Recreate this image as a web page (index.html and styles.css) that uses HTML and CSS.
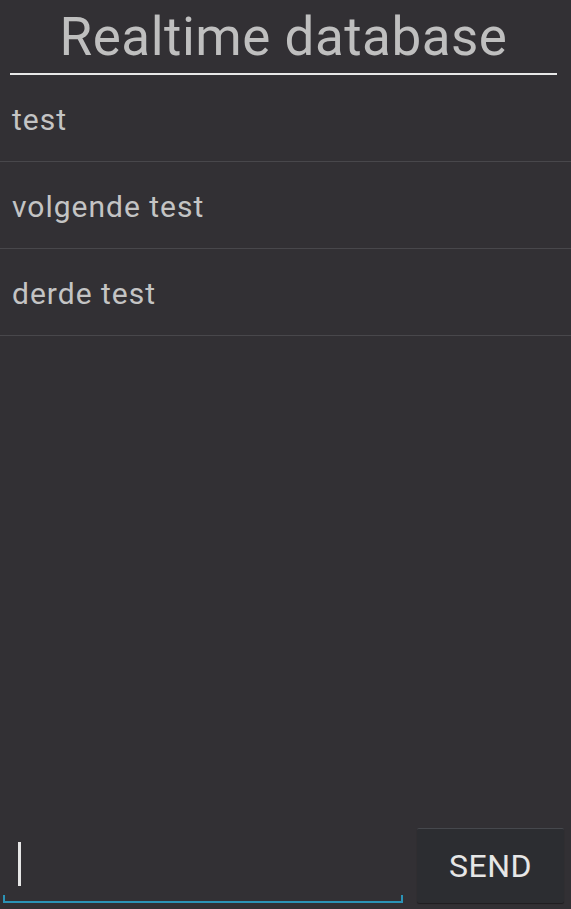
FILE: index.html
```html
<!DOCTYPE html>
<html>
<head>
<meta charset="utf-8">
<link rel="stylesheet" href="styles.css">
</head>
<body>
<div class="app">
  <header class="header">
    <h1 class="title">Realtime database</h1>
  </header>
  <ul class="list">
    <li class="item">test</li>
    <li class="item">volgende test</li>
    <li class="item">derde test</li>
  </ul>
  <div class="composer">
    <div class="input">
      <span class="cursor"></span>
    </div>
    <button class="send">SEND</button>
  </div>
</div>
</body>
</html>
```
FILE: styles.css
```css
html, body {
  margin: 0;
  padding: 0;
  background: #323034;
}
.app {
  width: 571px;
  height: 909px;
  display: flex;
  flex-direction: column;
  font-family: Roboto, "Liberation Sans", sans-serif;
  background: #323034;
}
.header {
  padding: 0 14px 0 10px;
}
.title {
  margin: 0;
  font-weight: 400;
  font-size: 53px;
  letter-spacing: 0.5px;
  line-height: 74px;
  height: 73px;
  text-align: center;
  color: #bfbfbf;
  border-bottom: 2px solid #e8e8e8;
  overflow: hidden;
}
.list {
  list-style: none;
  margin: 0;
  padding: 0;
  flex: 1;
}
.item {
  height: 83px;
  padding-top: 3px;
  border-bottom: 1px solid #48474b;
  padding-left: 12px;
  font-size: 30px;
  letter-spacing: 1px;
  line-height: 83px;
  color: #c4c4c4;
}
.composer {
  display: flex;
  align-items: flex-end;
  padding: 0 7px 6px 3px;
  gap: 14px;
}
.input {
  flex: 1;
  height: 73px;
  position: relative;
  border-bottom: 2px solid #2b93b6;
  display: flex;
  align-items: center;
  padding-left: 15px;
}
.input::before {
  content: "";
  position: absolute;
  left: 0;
  bottom: 0;
  width: 2px;
  height: 6px;
  background: #2b93b6;
}
.input::after {
  content: "";
  position: absolute;
  right: 0;
  bottom: 0;
  width: 2px;
  height: 6px;
  background: #2b93b6;
}
.cursor {
  display: block;
  width: 3px;
  height: 44px;
  margin-top: -2px;
  background: #e6e6e6;
}
.send {
  width: 147px;
  height: 75px;
  border: none;
  border-top: 1px solid #46484d;
  background: #2c2d31;
  color: #e6e6e6;
  font-family: Roboto, "Liberation Sans", sans-serif;
  font-size: 32px;
  letter-spacing: 0.5px;
  padding: 0;
  border-radius: 2px;
  box-shadow: 0 1px 1px rgba(0,0,0,0.4);
}
```
